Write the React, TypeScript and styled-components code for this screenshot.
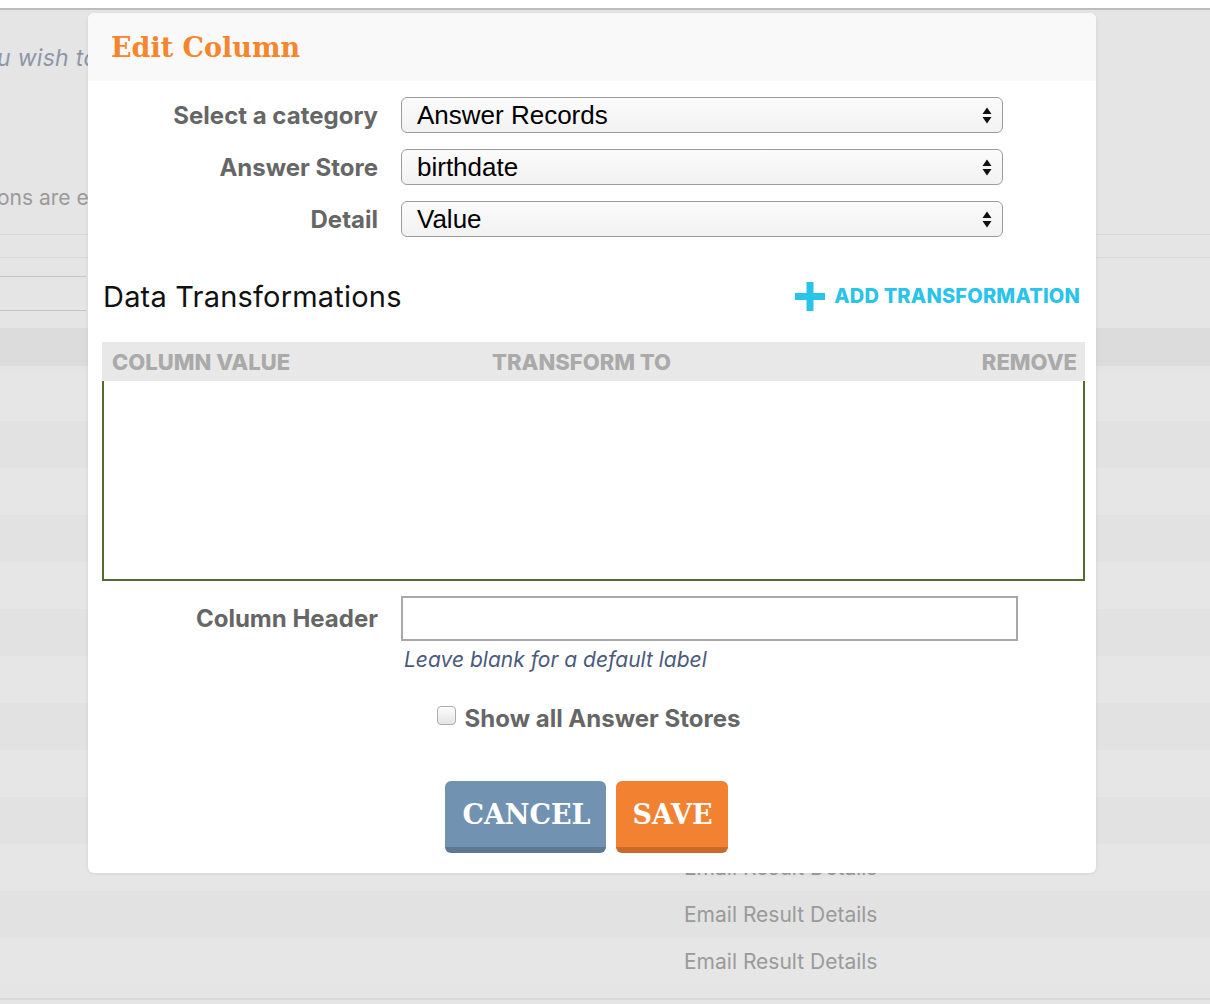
import React from "react";
import styled, { createGlobalStyle } from "styled-components";

const GlobalStyle = createGlobalStyle`
  html, body { margin: 0; padding: 0; background: #ffffff; }
  body { font-family: Inter, "Open Sans", Arial, sans-serif; }
  * { box-sizing: border-box; }
`;

/* ---------- page behind the dialog ---------- */

const Page = styled.div`
  position: relative;
  width: 1210px;
  height: 1004px;
  overflow: hidden;
`;

const TopStrip = styled.div`
  height: 8px;
  background: #ffffff;
`;

const Backdrop = styled.div`
  height: 996px;
  border-top: 2px solid #bcbcbc;
  background: #e5e5e5;
  display: flex;
  flex-direction: column;
  overflow: hidden;
`;

const Intro = styled.p<{ $italic?: boolean; $tone: string; $size: number; $track: number }>`
  margin: 0;
  height: 30px;
  line-height: 30px;
  font-size: ${(p) => p.$size}px;
  white-space: nowrap;
  font-style: ${(p) => (p.$italic ? "italic" : "normal")};
  color: ${(p) => p.$tone};
  text-indent: -3px;
  letter-spacing: ${(p) => p.$track}px;
`;

const IntroGap = styled.div<{ $h: number }>`
  height: ${(p) => p.$h}px;
  flex: none;
`;

const Rule = styled.div`
  height: 24px;
  border-top: 1px solid #d9d9d9;
  border-bottom: 1px solid #d9d9d9;
`;

const BgField = styled.div`
  margin-top: 18px;
  width: 86px;
  height: 35px;
  border-top: 1px solid #c4c4c4;
  border-bottom: 1px solid #c4c4c4;
`;

const BgHeadBand = styled.div`
  margin-top: 17px;
  height: 38px;
  background: #dcdcdc;
  flex: none;
`;

const BgRows = styled.div`
  padding-top: 8px;
  display: flex;
  flex-direction: column;
`;

const BgRow = styled.div<{ $alt: boolean }>`
  height: 47px;
  flex: none;
  display: flex;
  align-items: center;
  padding-left: 684px;
  background: ${(p) => (p.$alt ? "#e2e2e2" : "#e6e6e6")};
  color: #9a9a9a;
  font-size: 21px;
`;

const BgFootRule = styled.div`
  margin-top: 13px;
  height: 2px;
  background: #d8d8d8;
  flex: none;
`;

/* ---------- dialog ---------- */

const Modal = styled.div`
  position: absolute;
  top: 13px;
  left: 88px;
  width: 1008px;
  background: #ffffff;
  border-radius: 6px;
  overflow: hidden;
  box-shadow: 0 1px 4px rgba(0, 0, 0, 0.08);
`;

const ModalHeader = styled.div`
  height: 68px;
  background: #f9f9f9;
  display: flex;
  align-items: center;
  padding-left: 23px;
`;

const Title = styled.h2`
  margin: 0;
  font-family: "DejaVu Serif", "Liberation Serif", serif;
  font-weight: bold;
  font-size: 27px;
  color: #f5862e;
`;

const ModalBody = styled.div`
  padding: 16px 11px 20px 14px;
  display: flex;
  flex-direction: column;
`;

const FieldStack = styled.div<{ $top?: number }>`
  display: flex;
  flex-direction: column;
  gap: 16px;
  margin-top: ${(p) => p.$top || 0}px;
`;

const FieldRow = styled.div`
  display: grid;
  grid-template-columns: 276px auto;
  column-gap: 23px;
  align-items: center;
`;

const Label = styled.label`
  text-align: right;
  font-weight: 700;
  font-size: 24px;
  color: #666666;
`;

const SelectBox = styled.div`
  width: 602px;
  height: 36px;
  border: 1px solid #9c9c9c;
  border-radius: 6px;
  background: linear-gradient(#fbfbfb, #f2f2f2);
  display: flex;
  align-items: center;
  justify-content: space-between;
  padding: 0 10px 0 15px;
  font-family: "Liberation Sans", Arial, sans-serif;
  font-size: 26px;
  color: #000000;
`;

const SectionHead = styled.div`
  margin-top: 41px;
  height: 36px;
  display: flex;
  align-items: center;
  justify-content: space-between;
  padding: 0 5px 0 1px;
`;

const SectionTitle = styled.h3`
  margin: 0;
  font-weight: 400;
  font-size: 29px;
  letter-spacing: 0.2px;
  color: #111111;
`;

const AddLink = styled.a`
  display: flex;
  align-items: center;
  gap: 9px;
  font-weight: 800;
  font-size: 20px;
  color: #2ac3ea;
  text-decoration: none;
  cursor: pointer;
  letter-spacing: 0.2px;
`;

const TableHead = styled.div`
  margin-top: 28px;
  height: 39px;
  background: #e8e8e8;
  display: grid;
  grid-template-columns: 380px 1fr auto;
  align-items: center;
  padding: 0 8px 0 10px;
  font-weight: 800;
  font-size: 22px;
  color: #aaaaaa;
`;

const TableBody = styled.div`
  height: 200px;
  border: 2px solid #556b2f;
  border-top: none;
`;

const HeaderField = styled.input`
  width: 617px;
  height: 45px;
  border: 2px solid #a8a8a8;
  border-radius: 0;
  background: #ffffff;
  font-size: 20px;
  padding: 0 10px;
  outline: none;
`;

const Hint = styled.div`
  margin-top: 7px;
  padding-left: 302px;
  line-height: 24px;
  font-style: italic;
  font-size: 21px;
  color: #4a5a7c;
`;

const CheckRow = styled.label`
  margin-top: 32px;
  display: flex;
  justify-content: center;
  align-items: center;
  gap: 9px;
  font-weight: 700;
  font-size: 24px;
  color: #666666;
  padding-right: 10px;
`;

const CheckBox = styled.span`
  width: 19px;
  height: 19px;
  margin-top: -6px;
  border: 1px solid #acacac;
  border-radius: 4px;
  background: linear-gradient(#fdfdfd, #e4e4e4);
  box-shadow: inset 0 1px 1px rgba(255, 255, 255, 0.8);
`;

const ButtonBar = styled.div`
  margin-top: 48px;
  display: flex;
  justify-content: center;
  gap: 10px;
  padding-right: 14px;
`;

const Button = styled.button<{ $face: string; $edge: string }>`
  height: 72px;
  padding: 0 15px 0 17px;
  border: none;
  border-bottom: 6px solid ${(p) => p.$edge};
  border-radius: 6px;
  background: ${(p) => p.$face};
  color: #ffffff;
  font-family: "DejaVu Serif", "Liberation Serif", serif;
  font-weight: bold;
  font-size: 27px;
  cursor: pointer;
`;

/* ---------- drawings ---------- */

const UpDown = () => (
  <svg width="10" height="17" viewBox="0 0 10 17" aria-hidden>
    <path d="M5 0.5 L9.5 7 H0.5 Z" fill="#111" />
    <path d="M0.5 10 H9.5 L5 16.5 Z" fill="#111" />
  </svg>
);

const PlusIcon = () => (
  <svg width="30" height="29" viewBox="0 0 30 29" aria-hidden>
    <rect x="11.5" y="0" width="7" height="29" fill="#2ac3ea" />
    <rect x="0" y="11" width="30" height="7" fill="#2ac3ea" />
  </svg>
);

const fields = [
  { label: "Select a category", value: "Answer Records" },
  { label: "Answer Store", value: "birthdate" },
  { label: "Detail", value: "Value" },
];

export default function App() {
  const rows = Array.from({ length: 13 }, (_, i) => i);
  return (
    <Page>
      <GlobalStyle />
      <TopStrip />
      <Backdrop>
        <IntroGap $h={33} />
        <Intro $italic $tone="#8d96a8" $size={23} $track={0.3}>
          u wish to include in your export
        </Intro>
        <IntroGap $h={110} />
        <Intro $tone="#9a9a9a" $size={21} $track={0}>
          ons are exported as shown below
        </Intro>
        <IntroGap $h={21} />
        <Rule />
        <BgField />
        <BgHeadBand />
        <BgRows>
          {rows.map((i) => (
            <BgRow key={i} $alt={i % 2 === 1}>
              Email Result Details
            </BgRow>
          ))}
        </BgRows>
        <BgFootRule />
      </Backdrop>

      <Modal role="dialog" aria-label="Edit Column">
        <ModalHeader>
          <Title>Edit Column</Title>
        </ModalHeader>
        <ModalBody>
          <FieldStack>
            {fields.map((f) => (
              <FieldRow key={f.label}>
                <Label>{f.label}</Label>
                <SelectBox>
                  <span>{f.value}</span>
                  <UpDown />
                </SelectBox>
              </FieldRow>
            ))}
          </FieldStack>

          <SectionHead>
            <SectionTitle>Data Transformations</SectionTitle>
            <AddLink>
              <PlusIcon />
              ADD TRANSFORMATION
            </AddLink>
          </SectionHead>

          <TableHead>
            <span>COLUMN VALUE</span>
            <span>TRANSFORM TO</span>
            <span>REMOVE</span>
          </TableHead>
          <TableBody />

          <FieldStack $top={15}>
            <FieldRow>
              <Label>Column Header</Label>
              <HeaderField type="text" />
            </FieldRow>
          </FieldStack>
          <Hint>Leave blank for a default label</Hint>

          <CheckRow>
            <CheckBox />
            Show all Answer Stores
          </CheckRow>

          <ButtonBar>
            <Button $face="#7292b1" $edge="#5f7892">CANCEL</Button>
            <Button $face="#f28132" $edge="#c96a2a">SAVE</Button>
          </ButtonBar>
        </ModalBody>
      </Modal>
    </Page>
  );
}
